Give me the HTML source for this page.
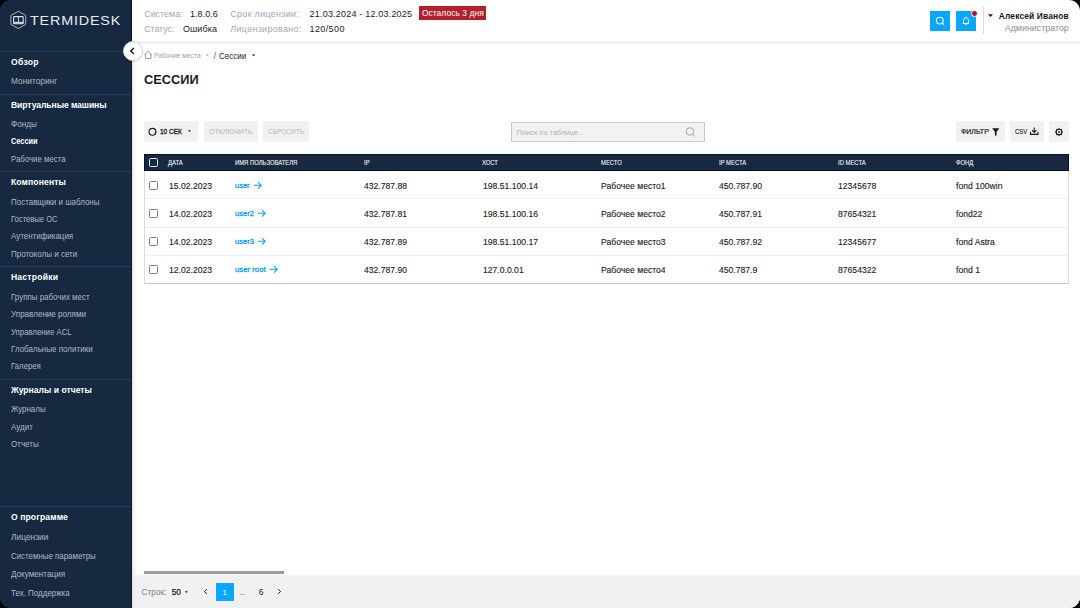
<!DOCTYPE html>
<html><head><meta charset="utf-8">
<style>
*{margin:0;padding:0;box-sizing:border-box}
html,body{width:1080px;height:608px;background:#000;overflow:hidden}
body{font-family:"Liberation Sans",sans-serif;color:#1a1a1a}
#app{position:absolute;left:0;top:0;width:1080px;height:608px;border-radius:11px;overflow:hidden;background:linear-gradient(90deg,#172941 0,#172941 132px,#fff 132px)}
.a{position:absolute}
.t{position:absolute;white-space:nowrap;line-height:1}
</style></head>
<body><div id="app">
<div class='a' style='left:0;top:0;width:132px;height:608px;background:#172941'></div>
<div class='a' style='left:131px;top:0;width:1px;height:608px;background:#0e1a2c'></div>
<div class='a' style='left:132px;top:42px;width:4px;height:566px;background:linear-gradient(90deg,rgba(0,0,0,.10),rgba(0,0,0,0))'></div>
<div class='a' style='left:0;top:51px;width:131px;height:1px;background:#243a59'></div>
<div class='a' style='left:0;top:94px;width:131px;height:1px;background:#243a59'></div>
<div class='a' style='left:0;top:171px;width:131px;height:1px;background:#243a59'></div>
<div class='a' style='left:0;top:266px;width:131px;height:1px;background:#243a59'></div>
<div class='a' style='left:0;top:379px;width:131px;height:1px;background:#243a59'></div>
<div class='a' style='left:0;top:506px;width:131px;height:1px;background:#243a59'></div>
<svg class='a' style='left:0;top:0' width='132' height='40' viewBox='0 0 132 40'>
<path d='M18.3 11.2 L25.7 15.4 L25.7 24.4 L18.3 28.6 L10.9 24.4 L10.9 15.4 Z' fill='none' stroke='#b9c0cc' stroke-width='0.9'/>
<rect x='13.6' y='16.6' width='9.6' height='7.2' rx='0.8' fill='none' stroke='#d9dde4' stroke-width='1.1'/>
<line x1='18.4' y1='16.4' x2='18.4' y2='22' stroke='#d9dde4' stroke-width='1'/>
<rect x='13.6' y='21.8' width='9.6' height='2.0' fill='#cfd4dc'/>
</svg>
<span class='t' style='left:30.2px;top:14.90px;font-size:12.4px;color:#e8ebf0;letter-spacing:0.7px;transform:scaleX(1.16);transform-origin:0 0'>TERMIDESK</span>
<div class='a' style='left:132px;top:41px;width:948px;height:1px;background:#f5f5f5'></div>
<div class='a' style='left:132px;top:42px;width:948px;height:1px;background:#ececec'></div>
<div class='a' style='left:132px;top:43px;width:948px;height:1px;background:#f8f8f8'></div>
<div class='a' style='left:419px;top:6px;width:67px;height:14px;background:#b21f2d'></div>
<div class='a' style='left:930px;top:11px;width:20px;height:20px;background:#0aa5fd'></div>
<div class='a' style='left:956px;top:11px;width:20px;height:20px;background:#0aa5fd'></div>
<svg class='a' style='left:930px;top:11px' width='20' height='20' viewBox='0 0 20 20'>
<circle cx='9.8' cy='9.6' r='3.4' fill='none' stroke='#fff' stroke-width='1.1'/>
<line x1='12.2' y1='12' x2='13.9' y2='13.7' stroke='#fff' stroke-width='1.1'/></svg>
<svg class='a' style='left:956px;top:11px' width='20' height='20' viewBox='0 0 20 20'>
<path d='M7.5 12.4 L7.5 9.6 Q7.5 6.7 10 6.5 Q12.5 6.7 12.5 9.6 L12.5 12.4 Z' fill='none' stroke='#fff' stroke-width='0.95'/>
<line x1='6.8' y1='12.5' x2='13.2' y2='12.5' stroke='#fff' stroke-width='0.95'/>
<path d='M9.2 13.4 Q10 14.2 10.8 13.4' fill='none' stroke='#fff' stroke-width='0.9'/>
<line x1='10' y1='5.7' x2='10' y2='6.5' stroke='#fff' stroke-width='0.9'/></svg>
<div class='a' style='left:971.2px;top:10px;width:7px;height:7px;border-radius:50%;background:#a8151f;border:1px solid #fff'></div>
<div class='a' style='left:983px;top:7px;width:1px;height:27px;background:#d9d9d9'></div>
<svg class='a' style='left:987px;top:13px' width='7' height='5' viewBox='0 0 7 5'><path d='M1 1.3 L6 1.3 L3.5 3.9 Z' fill='#1b1b1b'/></svg>
<div class='a' style='left:122.5px;top:41px;width:20px;height:20px;border-radius:50%;background:#fff;border:1px solid #d6d6d6;box-shadow:0 1px 2px rgba(0,0,0,.12)'></div>
<svg class='a' style='left:122.5px;top:41px' width='20' height='20' viewBox='0 0 20 20'><path d='M10.9 6.9 L7.8 10 L10.9 13.1' fill='none' stroke='#111' stroke-width='1.35'/></svg>
<svg class='a' style='left:144px;top:50px' width='9' height='10' viewBox='0 0 9 10'>
<path d='M0.6 4.9 L4.3 1.2 L8 4.9 M1.6 3.9 L1.6 8.6 L7 8.6 L7 3.9' fill='none' stroke='#8a8a8a' stroke-width='0.9'/></svg>
<svg class='a' style='left:205px;top:53px' width='5' height='4' viewBox='0 0 5 4'><path d='M0.8 1.4 L4 1.4 L2.4 3.1 Z' fill='#9a9a9a'/></svg>
<svg class='a' style='left:251px;top:53px' width='5' height='4' viewBox='0 0 5 4'><path d='M0.8 1.4 L4.2 1.4 L2.5 3.2 Z' fill='#1b1b1b'/></svg>
<div class='a' style='left:144px;top:121px;width:54px;height:21px;background:#f1f1f1'></div>
<div class='a' style='left:204px;top:121px;width:53.5px;height:21px;background:#f1f1f1'></div>
<div class='a' style='left:263px;top:121px;width:45.7px;height:21px;background:#f1f1f1'></div>
<svg class='a' style='left:148px;top:127px' width='10' height='10' viewBox='0 0 10 10'>
<circle cx='4.5' cy='4.8' r='3.4' fill='none' stroke='#1b1b1b' stroke-width='1.15'/><path d='M7.2 4.2 L8.6 5.6 L6.6 6.2 Z' fill='#1b1b1b'/></svg>
<svg class='a' style='left:187px;top:129px' width='5' height='4' viewBox='0 0 5 4'><path d='M0.9 1.3 L3.9 1.3 L2.4 2.9 Z' fill='#1b1b1b'/></svg>
<div class='a' style='left:511px;top:121.5px;width:194px;height:20px;background:#f2f2f2;border:1px solid #c9c9c9'></div>
<svg class='a' style='left:684px;top:126px' width='13' height='12' viewBox='0 0 13 12'>
<circle cx='5.9' cy='5.5' r='3.8' fill='none' stroke='#9b9b9b' stroke-width='0.9'/>
<line x1='8.6' y1='8.2' x2='11' y2='10.5' stroke='#9b9b9b' stroke-width='0.9'/></svg>
<div class='a' style='left:956px;top:121px;width:48.5px;height:21px;background:#f1f1f1'></div>
<div class='a' style='left:1010px;top:121px;width:33.8px;height:21px;background:#f1f1f1'></div>
<div class='a' style='left:1048.7px;top:121px;width:20.7px;height:21px;background:#f1f1f1'></div>
<svg class='a' style='left:991px;top:127px' width='10' height='10' viewBox='0 0 10 10'><path d='M1.2 1.3 L8.3 1.3 L5.6 4.8 L5.6 8.6 L3.9 8.6 L3.9 4.8 Z' fill='#1b1b1b'/></svg>
<svg class='a' style='left:1029px;top:126px' width='11' height='10' viewBox='0 0 11 10'>
<path d='M5.2 1.5 L5.2 6.2 M3 4.2 L5.2 6.4 L7.4 4.2' fill='none' stroke='#1b1b1b' stroke-width='1.1'/>
<path d='M1.5 5.8 L1.5 8.4 L9 8.4 L9 5.8' fill='none' stroke='#1b1b1b' stroke-width='1.1'/></svg>
<svg class='a' style='left:1054px;top:126.6px' width='10' height='10' viewBox='0 0 10 10'>
<circle cx='5' cy='5' r='2.8' fill='none' stroke='#1b1b1b' stroke-width='1.1'/><rect x='4.4' y='1.1' width='1.2' height='1.2' fill='#1b1b1b' transform='rotate(0 5 5)'/><rect x='4.4' y='1.1' width='1.2' height='1.2' fill='#1b1b1b' transform='rotate(45 5 5)'/><rect x='4.4' y='1.1' width='1.2' height='1.2' fill='#1b1b1b' transform='rotate(90 5 5)'/><rect x='4.4' y='1.1' width='1.2' height='1.2' fill='#1b1b1b' transform='rotate(135 5 5)'/><rect x='4.4' y='1.1' width='1.2' height='1.2' fill='#1b1b1b' transform='rotate(180 5 5)'/><rect x='4.4' y='1.1' width='1.2' height='1.2' fill='#1b1b1b' transform='rotate(225 5 5)'/><rect x='4.4' y='1.1' width='1.2' height='1.2' fill='#1b1b1b' transform='rotate(270 5 5)'/><rect x='4.4' y='1.1' width='1.2' height='1.2' fill='#1b1b1b' transform='rotate(315 5 5)'/>
<circle cx='5' cy='5' r='1' fill='#1b1b1b'/></svg>
<div class='a' style='left:144px;top:154px;width:925px;height:130px;border:1px solid #dcdcdc;border-bottom-color:#c9c9c9;border-top:none;background:#fff'></div>
<div class='a' style='left:144px;top:154px;width:925px;height:17px;background:#172941;border:1px solid #06102a'></div>
<div class='a' style='left:145px;top:198px;width:923px;height:1px;background:#eeeff3'></div>
<div class='a' style='left:145px;top:227px;width:923px;height:1px;background:#eeeff3'></div>
<div class='a' style='left:145px;top:255px;width:923px;height:1px;background:#eeeff3'></div>
<div class='a' style='left:149px;top:157.8px;width:9px;height:9px;border:1.6px solid #e8ebf0;border-radius:1.5px'></div>
<div class='a' style='left:149px;top:180.9px;width:9px;height:9px;border:1.2px solid #808080;border-radius:1.5px'></div>
<div class='a' style='left:149px;top:208.9px;width:9px;height:9px;border:1.2px solid #808080;border-radius:1.5px'></div>
<div class='a' style='left:149px;top:236.9px;width:9px;height:9px;border:1.2px solid #808080;border-radius:1.5px'></div>
<div class='a' style='left:149px;top:264.9px;width:9px;height:9px;border:1.2px solid #808080;border-radius:1.5px'></div>
<svg class='a' style='left:253.0px;top:180.2px' width='10' height='10' viewBox='0 0 10 10'>
<path d='M1 5.3 L8 5.3 M5 2 L8.2 5.3 L5 8.6' fill='none' stroke='#0aa0f0' stroke-width='1.05'/></svg>
<svg class='a' style='left:257.1px;top:208.2px' width='10' height='10' viewBox='0 0 10 10'>
<path d='M1 5.3 L8 5.3 M5 2 L8.2 5.3 L5 8.6' fill='none' stroke='#0aa0f0' stroke-width='1.05'/></svg>
<svg class='a' style='left:257.1px;top:236.2px' width='10' height='10' viewBox='0 0 10 10'>
<path d='M1 5.3 L8 5.3 M5 2 L8.2 5.3 L5 8.6' fill='none' stroke='#0aa0f0' stroke-width='1.05'/></svg>
<svg class='a' style='left:268.9px;top:264.2px' width='10' height='10' viewBox='0 0 10 10'>
<path d='M1 5.3 L8 5.3 M5 2 L8.2 5.3 L5 8.6' fill='none' stroke='#0aa0f0' stroke-width='1.05'/></svg>
<div class='a' style='left:144px;top:571px;width:140px;height:3px;background:#9b9b9b'></div>
<div class='a' style='left:134px;top:575px;width:946px;height:33px;background:#f1f1f1'></div>
<svg class='a' style='left:184px;top:590px' width='5' height='4' viewBox='0 0 5 4'><path d='M0.8 1.2 L4 1.2 L2.4 2.9 Z' fill='#1b1b1b'/></svg>
<svg class='a' style='left:202px;top:588px' width='7' height='7' viewBox='0 0 7 7'><path d='M4.8 1.2 L2.4 3.5 L4.8 5.8' fill='none' stroke='#1b1b1b' stroke-width='1'/></svg>
<div class='a' style='left:215.7px;top:582.8px;width:18.2px;height:17.8px;background:#0aa5fd'></div>
<svg class='a' style='left:276px;top:588px' width='7' height='7' viewBox='0 0 7 7'><path d='M2.2 1.2 L4.6 3.5 L2.2 5.8' fill='none' stroke='#1b1b1b' stroke-width='1'/></svg>
<span class='t' style='left:10.90px;top:58.00px;font-size:8.60px;color:#ffffff;font-weight:bold;letter-spacing:0.316px;'>Обзор</span>
<span class='t' style='left:10.90px;top:78.00px;font-size:8.20px;color:#b0b7c3;font-weight:normal;letter-spacing:0.000px;transform:scaleX(1.017);transform-origin:0 0;'>Мониторинг</span>
<span class='t' style='left:10.90px;top:101.00px;font-size:8.60px;color:#ffffff;font-weight:bold;letter-spacing:-0.073px;'>Виртуальные машины</span>
<span class='t' style='left:10.90px;top:121.00px;font-size:8.20px;color:#b0b7c3;font-weight:normal;letter-spacing:0.000px;transform:scaleX(1.001);transform-origin:0 0;'>Фонды</span>
<span class='t' style='left:10.90px;top:137.00px;font-size:8.40px;color:#ffffff;font-weight:bold;letter-spacing:0.000px;transform:scaleX(0.880);transform-origin:0 0;'>Сессии</span>
<span class='t' style='left:10.90px;top:156.00px;font-size:8.20px;color:#b0b7c3;font-weight:normal;letter-spacing:0.000px;transform:scaleX(0.957);transform-origin:0 0;'>Рабочие места</span>
<span class='t' style='left:10.90px;top:178.00px;font-size:8.60px;color:#ffffff;font-weight:bold;letter-spacing:0.123px;'>Компоненты</span>
<span class='t' style='left:10.90px;top:199.00px;font-size:8.20px;color:#b0b7c3;font-weight:normal;letter-spacing:0.000px;transform:scaleX(0.973);transform-origin:0 0;'>Поставщики и шаблоны</span>
<span class='t' style='left:10.90px;top:216.00px;font-size:8.20px;color:#b0b7c3;font-weight:normal;letter-spacing:0.000px;transform:scaleX(0.930);transform-origin:0 0;'>Гостевые ОС</span>
<span class='t' style='left:10.90px;top:233.00px;font-size:8.20px;color:#b0b7c3;font-weight:normal;letter-spacing:0.000px;transform:scaleX(0.974);transform-origin:0 0;'>Аутентификация</span>
<span class='t' style='left:10.90px;top:251.00px;font-size:8.20px;color:#b0b7c3;font-weight:normal;letter-spacing:0.000px;transform:scaleX(0.981);transform-origin:0 0;'>Протоколы и сети</span>
<span class='t' style='left:10.90px;top:273.00px;font-size:8.60px;color:#ffffff;font-weight:bold;letter-spacing:0.220px;'>Настройки</span>
<span class='t' style='left:10.90px;top:294.00px;font-size:8.20px;color:#b0b7c3;font-weight:normal;letter-spacing:0.000px;transform:scaleX(0.971);transform-origin:0 0;'>Группы рабочих мест</span>
<span class='t' style='left:10.90px;top:311.00px;font-size:8.20px;color:#b0b7c3;font-weight:normal;letter-spacing:0.000px;transform:scaleX(0.985);transform-origin:0 0;'>Управление ролями</span>
<span class='t' style='left:10.90px;top:329.00px;font-size:8.20px;color:#b0b7c3;font-weight:normal;letter-spacing:0.000px;transform:scaleX(0.951);transform-origin:0 0;'>Управление ACL</span>
<span class='t' style='left:10.90px;top:346.00px;font-size:8.20px;color:#b0b7c3;font-weight:normal;letter-spacing:0.000px;transform:scaleX(0.979);transform-origin:0 0;'>Глобальные политики</span>
<span class='t' style='left:10.90px;top:363.00px;font-size:8.20px;color:#b0b7c3;font-weight:normal;letter-spacing:0.000px;transform:scaleX(0.949);transform-origin:0 0;'>Галерея</span>
<span class='t' style='left:10.90px;top:386.00px;font-size:8.60px;color:#ffffff;font-weight:bold;letter-spacing:0.002px;'>Журналы и отчеты</span>
<span class='t' style='left:10.90px;top:406.00px;font-size:8.20px;color:#b0b7c3;font-weight:normal;letter-spacing:0.000px;transform:scaleX(0.967);transform-origin:0 0;'>Журналы</span>
<span class='t' style='left:10.90px;top:424.00px;font-size:8.20px;color:#b0b7c3;font-weight:normal;letter-spacing:0.000px;transform:scaleX(0.978);transform-origin:0 0;'>Аудит</span>
<span class='t' style='left:10.90px;top:441.00px;font-size:8.20px;color:#b0b7c3;font-weight:normal;letter-spacing:0.000px;transform:scaleX(0.978);transform-origin:0 0;'>Отчеты</span>
<span class='t' style='left:10.90px;top:513.00px;font-size:8.60px;color:#ffffff;font-weight:bold;letter-spacing:0.113px;'>О программе</span>
<span class='t' style='left:10.90px;top:534.00px;font-size:8.20px;color:#b0b7c3;font-weight:normal;letter-spacing:0.000px;transform:scaleX(1.024);transform-origin:0 0;'>Лицензии</span>
<span class='t' style='left:10.90px;top:553.00px;font-size:8.20px;color:#b0b7c3;font-weight:normal;letter-spacing:0.000px;transform:scaleX(0.965);transform-origin:0 0;'>Системные параметры</span>
<span class='t' style='left:10.90px;top:571.00px;font-size:8.20px;color:#b0b7c3;font-weight:normal;letter-spacing:0.000px;transform:scaleX(0.993);transform-origin:0 0;'>Документация</span>
<span class='t' style='left:10.90px;top:590.00px;font-size:8.20px;color:#b0b7c3;font-weight:normal;letter-spacing:0.000px;transform:scaleX(0.974);transform-origin:0 0;'>Тех. Поддержка</span>
<span class='t' style='left:144.20px;top:10.00px;font-size:9.00px;color:#a2a7b3;font-weight:normal;letter-spacing:-0.050px;'>Система:</span>
<span class='t' style='left:190.00px;top:10.00px;font-size:9.00px;color:#1b1b1b;font-weight:normal;letter-spacing:0.045px;'>1.8.0.6</span>
<span class='t' style='left:230.30px;top:10.00px;font-size:9.00px;color:#a2a7b3;font-weight:normal;letter-spacing:0.273px;'>Срок лицензии:</span>
<span class='t' style='left:309.60px;top:10.00px;font-size:9.00px;color:#1b1b1b;font-weight:normal;letter-spacing:0.196px;'>21.03.2024 - 12.03.2025</span>
<span class='t' style='left:421.90px;top:9.00px;font-size:8.40px;color:#ffffff;font-weight:normal;letter-spacing:0.088px;'>Осталось 3 дня</span>
<span class='t' style='left:144.20px;top:25.00px;font-size:9.00px;color:#a2a7b3;font-weight:normal;letter-spacing:-0.142px;'>Статус:</span>
<span class='t' style='left:183.00px;top:25.00px;font-size:9.00px;color:#1b1b1b;font-weight:normal;letter-spacing:0.071px;'>Ошибка</span>
<span class='t' style='left:230.30px;top:25.00px;font-size:9.00px;color:#a2a7b3;font-weight:normal;letter-spacing:0.285px;'>Лицензировано:</span>
<span class='t' style='left:309.60px;top:25.00px;font-size:9.00px;color:#1b1b1b;font-weight:normal;letter-spacing:0.376px;'>120/500</span>
<span class='t' style='left:998.75px;top:12.00px;font-size:8.40px;color:#151515;font-weight:bold;letter-spacing:0.167px;'>Алексей Иванов</span>
<span class='t' style='left:1004.75px;top:24.00px;font-size:8.90px;color:#8f8f8f;font-weight:normal;letter-spacing:-0.003px;'>Администратор</span>
<span class='t' style='left:153.90px;top:52.00px;font-size:7.00px;color:#a0a0a0;font-weight:normal;letter-spacing:0.000px;transform:scaleX(0.957);transform-origin:0 0;'>Рабочие места</span>
<span class='t' style='left:213.60px;top:52.00px;font-size:9.00px;color:#555555;font-weight:normal;letter-spacing:0.000px;'>/</span>
<span class='t' style='left:218.90px;top:52.00px;font-size:8.60px;color:#1b1b1b;font-weight:normal;letter-spacing:0.000px;transform:scaleX(0.932);transform-origin:0 0;'>Сессии</span>
<span class='t' style='left:144.20px;top:73.00px;font-size:13.60px;color:#1b1b1b;font-weight:bold;letter-spacing:0.000px;transform:scaleX(0.940);transform-origin:0 0;'>СЕССИИ</span>
<span class='t' style='left:160.00px;top:128.00px;font-size:7.70px;color:#1b1b1b;font-weight:normal;letter-spacing:0.000px;transform:scaleX(0.847);transform-origin:0 0;-webkit-text-stroke:0.35px #1b1b1b;'>10 СЕК</span>
<span class='t' style='left:209.00px;top:128.00px;font-size:7.70px;color:#b5b5b5;font-weight:normal;letter-spacing:0.000px;transform:scaleX(0.904);transform-origin:0 0;'>ОТКЛЮЧИТЬ</span>
<span class='t' style='left:268.00px;top:128.00px;font-size:7.70px;color:#b5b5b5;font-weight:normal;letter-spacing:0.000px;transform:scaleX(0.848);transform-origin:0 0;'>СБРОСИТЬ</span>
<span class='t' style='left:516.70px;top:129.00px;font-size:7.40px;color:#b1b1b1;font-weight:normal;letter-spacing:0.024px;'>Поиск по таблице...</span>
<span class='t' style='left:960.80px;top:128.00px;font-size:7.30px;color:#1b1b1b;font-weight:normal;letter-spacing:0.000px;transform:scaleX(0.960);transform-origin:0 0;-webkit-text-stroke:0.2px #1b1b1b;'>ФИЛЬТР</span>
<span class='t' style='left:1015.00px;top:128.00px;font-size:7.60px;color:#1b1b1b;font-weight:normal;letter-spacing:0.000px;transform:scaleX(0.781);transform-origin:0 0;-webkit-text-stroke:0.15px #1b1b1b;'>CSV</span>
<span class='t' style='left:168.30px;top:159.00px;font-size:7.00px;color:#f2f4f7;font-weight:normal;letter-spacing:0.000px;-webkit-text-stroke:0.1px #f2f4f7;transform:scaleX(0.84);transform-origin:0 0;'>ДАТА</span>
<span class='t' style='left:234.80px;top:159.00px;font-size:7.00px;color:#f2f4f7;font-weight:normal;letter-spacing:0.000px;-webkit-text-stroke:0.1px #f2f4f7;transform:scaleX(0.84);transform-origin:0 0;'>ИМЯ ПОЛЬЗОВАТЕЛЯ</span>
<span class='t' style='left:363.60px;top:159.00px;font-size:7.00px;color:#f2f4f7;font-weight:normal;letter-spacing:0.000px;-webkit-text-stroke:0.1px #f2f4f7;transform:scaleX(0.84);transform-origin:0 0;'>IP</span>
<span class='t' style='left:482.20px;top:159.00px;font-size:7.00px;color:#f2f4f7;font-weight:normal;letter-spacing:0.000px;-webkit-text-stroke:0.1px #f2f4f7;transform:scaleX(0.84);transform-origin:0 0;'>ХОСТ</span>
<span class='t' style='left:600.60px;top:159.00px;font-size:7.00px;color:#f2f4f7;font-weight:normal;letter-spacing:0.000px;-webkit-text-stroke:0.1px #f2f4f7;transform:scaleX(0.84);transform-origin:0 0;'>МЕСТО</span>
<span class='t' style='left:719.00px;top:159.00px;font-size:7.00px;color:#f2f4f7;font-weight:normal;letter-spacing:0.000px;-webkit-text-stroke:0.1px #f2f4f7;transform:scaleX(0.84);transform-origin:0 0;'>IP МЕСТА</span>
<span class='t' style='left:838.00px;top:159.00px;font-size:7.00px;color:#f2f4f7;font-weight:normal;letter-spacing:0.000px;-webkit-text-stroke:0.1px #f2f4f7;transform:scaleX(0.84);transform-origin:0 0;'>ID МЕСТА</span>
<span class='t' style='left:956.00px;top:159.00px;font-size:7.00px;color:#f2f4f7;font-weight:normal;letter-spacing:0.000px;-webkit-text-stroke:0.1px #f2f4f7;transform:scaleX(0.84);transform-origin:0 0;'>ФОНД</span>
<span class='t' style='left:168.70px;top:182.00px;font-size:8.90px;color:#1b1b1b;font-weight:normal;letter-spacing:0.000px;-webkit-text-stroke:0.12px #1b1b1b;transform:scaleX(0.97);transform-origin:0 0;'>15.02.2023</span>
<span class='t' style='left:234.80px;top:182.00px;font-size:8.00px;color:#0aa0f0;font-weight:normal;letter-spacing:0.000px;transform:scaleX(0.938);transform-origin:0 0;-webkit-text-stroke:0.3px #0aa0f0;'>user</span>
<span class='t' style='left:364.00px;top:182.00px;font-size:8.90px;color:#1b1b1b;font-weight:normal;letter-spacing:0.000px;-webkit-text-stroke:0.12px #1b1b1b;transform:scaleX(0.97);transform-origin:0 0;'>432.787.88</span>
<span class='t' style='left:482.60px;top:182.00px;font-size:8.90px;color:#1b1b1b;font-weight:normal;letter-spacing:0.000px;-webkit-text-stroke:0.12px #1b1b1b;transform:scaleX(0.97);transform-origin:0 0;'>198.51.100.14</span>
<span class='t' style='left:601.00px;top:182.00px;font-size:8.90px;color:#1b1b1b;font-weight:normal;letter-spacing:0.000px;-webkit-text-stroke:0.12px #1b1b1b;transform:scaleX(0.97);transform-origin:0 0;'>Рабочее место1</span>
<span class='t' style='left:719.40px;top:182.00px;font-size:8.90px;color:#1b1b1b;font-weight:normal;letter-spacing:0.000px;-webkit-text-stroke:0.12px #1b1b1b;transform:scaleX(0.97);transform-origin:0 0;'>450.787.90</span>
<span class='t' style='left:838.40px;top:182.00px;font-size:8.90px;color:#1b1b1b;font-weight:normal;letter-spacing:0.000px;-webkit-text-stroke:0.12px #1b1b1b;transform:scaleX(0.97);transform-origin:0 0;'>12345678</span>
<span class='t' style='left:956.40px;top:182.00px;font-size:8.90px;color:#1b1b1b;font-weight:normal;letter-spacing:0.000px;-webkit-text-stroke:0.12px #1b1b1b;transform:scaleX(0.97);transform-origin:0 0;'>fond 100win</span>
<span class='t' style='left:168.70px;top:210.00px;font-size:8.90px;color:#1b1b1b;font-weight:normal;letter-spacing:0.000px;-webkit-text-stroke:0.12px #1b1b1b;transform:scaleX(0.97);transform-origin:0 0;'>14.02.2023</span>
<span class='t' style='left:234.80px;top:210.00px;font-size:8.00px;color:#0aa0f0;font-weight:normal;letter-spacing:0.000px;transform:scaleX(0.949);transform-origin:0 0;-webkit-text-stroke:0.3px #0aa0f0;'>user2</span>
<span class='t' style='left:364.00px;top:210.00px;font-size:8.90px;color:#1b1b1b;font-weight:normal;letter-spacing:0.000px;-webkit-text-stroke:0.12px #1b1b1b;transform:scaleX(0.97);transform-origin:0 0;'>432.787.81</span>
<span class='t' style='left:482.60px;top:210.00px;font-size:8.90px;color:#1b1b1b;font-weight:normal;letter-spacing:0.000px;-webkit-text-stroke:0.12px #1b1b1b;transform:scaleX(0.97);transform-origin:0 0;'>198.51.100.16</span>
<span class='t' style='left:601.00px;top:210.00px;font-size:8.90px;color:#1b1b1b;font-weight:normal;letter-spacing:0.000px;-webkit-text-stroke:0.12px #1b1b1b;transform:scaleX(0.97);transform-origin:0 0;'>Рабочее место2</span>
<span class='t' style='left:719.40px;top:210.00px;font-size:8.90px;color:#1b1b1b;font-weight:normal;letter-spacing:0.000px;-webkit-text-stroke:0.12px #1b1b1b;transform:scaleX(0.97);transform-origin:0 0;'>450.787.91</span>
<span class='t' style='left:838.40px;top:210.00px;font-size:8.90px;color:#1b1b1b;font-weight:normal;letter-spacing:0.000px;-webkit-text-stroke:0.12px #1b1b1b;transform:scaleX(0.97);transform-origin:0 0;'>87654321</span>
<span class='t' style='left:956.40px;top:210.00px;font-size:8.90px;color:#1b1b1b;font-weight:normal;letter-spacing:0.000px;-webkit-text-stroke:0.12px #1b1b1b;transform:scaleX(0.97);transform-origin:0 0;'>fond22</span>
<span class='t' style='left:168.70px;top:238.00px;font-size:8.90px;color:#1b1b1b;font-weight:normal;letter-spacing:0.000px;-webkit-text-stroke:0.12px #1b1b1b;transform:scaleX(0.97);transform-origin:0 0;'>14.02.2023</span>
<span class='t' style='left:234.80px;top:238.00px;font-size:8.00px;color:#0aa0f0;font-weight:normal;letter-spacing:0.000px;transform:scaleX(0.949);transform-origin:0 0;-webkit-text-stroke:0.3px #0aa0f0;'>user3</span>
<span class='t' style='left:364.00px;top:238.00px;font-size:8.90px;color:#1b1b1b;font-weight:normal;letter-spacing:0.000px;-webkit-text-stroke:0.12px #1b1b1b;transform:scaleX(0.97);transform-origin:0 0;'>432.787.89</span>
<span class='t' style='left:482.60px;top:238.00px;font-size:8.90px;color:#1b1b1b;font-weight:normal;letter-spacing:0.000px;-webkit-text-stroke:0.12px #1b1b1b;transform:scaleX(0.97);transform-origin:0 0;'>198.51.100.17</span>
<span class='t' style='left:601.00px;top:238.00px;font-size:8.90px;color:#1b1b1b;font-weight:normal;letter-spacing:0.000px;-webkit-text-stroke:0.12px #1b1b1b;transform:scaleX(0.97);transform-origin:0 0;'>Рабочее место3</span>
<span class='t' style='left:719.40px;top:238.00px;font-size:8.90px;color:#1b1b1b;font-weight:normal;letter-spacing:0.000px;-webkit-text-stroke:0.12px #1b1b1b;transform:scaleX(0.97);transform-origin:0 0;'>450.787.92</span>
<span class='t' style='left:838.40px;top:238.00px;font-size:8.90px;color:#1b1b1b;font-weight:normal;letter-spacing:0.000px;-webkit-text-stroke:0.12px #1b1b1b;transform:scaleX(0.97);transform-origin:0 0;'>12345677</span>
<span class='t' style='left:956.40px;top:238.00px;font-size:8.90px;color:#1b1b1b;font-weight:normal;letter-spacing:0.000px;-webkit-text-stroke:0.12px #1b1b1b;transform:scaleX(0.97);transform-origin:0 0;'>fond Astra</span>
<span class='t' style='left:168.70px;top:266.00px;font-size:8.90px;color:#1b1b1b;font-weight:normal;letter-spacing:0.000px;-webkit-text-stroke:0.12px #1b1b1b;transform:scaleX(0.97);transform-origin:0 0;'>12.02.2023</span>
<span class='t' style='left:234.80px;top:266.00px;font-size:8.00px;color:#0aa0f0;font-weight:normal;letter-spacing:0.000px;transform:scaleX(0.969);transform-origin:0 0;-webkit-text-stroke:0.3px #0aa0f0;'>user root</span>
<span class='t' style='left:364.00px;top:266.00px;font-size:8.90px;color:#1b1b1b;font-weight:normal;letter-spacing:0.000px;-webkit-text-stroke:0.12px #1b1b1b;transform:scaleX(0.97);transform-origin:0 0;'>432.787.90</span>
<span class='t' style='left:482.60px;top:266.00px;font-size:8.90px;color:#1b1b1b;font-weight:normal;letter-spacing:0.000px;-webkit-text-stroke:0.12px #1b1b1b;transform:scaleX(0.97);transform-origin:0 0;'>127.0.0.01</span>
<span class='t' style='left:601.00px;top:266.00px;font-size:8.90px;color:#1b1b1b;font-weight:normal;letter-spacing:0.000px;-webkit-text-stroke:0.12px #1b1b1b;transform:scaleX(0.97);transform-origin:0 0;'>Рабочее место4</span>
<span class='t' style='left:719.40px;top:266.00px;font-size:8.90px;color:#1b1b1b;font-weight:normal;letter-spacing:0.000px;-webkit-text-stroke:0.12px #1b1b1b;transform:scaleX(0.97);transform-origin:0 0;'>450.787.9</span>
<span class='t' style='left:838.40px;top:266.00px;font-size:8.90px;color:#1b1b1b;font-weight:normal;letter-spacing:0.000px;-webkit-text-stroke:0.12px #1b1b1b;transform:scaleX(0.97);transform-origin:0 0;'>87654322</span>
<span class='t' style='left:956.40px;top:266.00px;font-size:8.90px;color:#1b1b1b;font-weight:normal;letter-spacing:0.000px;-webkit-text-stroke:0.12px #1b1b1b;transform:scaleX(0.97);transform-origin:0 0;'>fond 1</span>
<span class='t' style='left:141.60px;top:589.00px;font-size:8.25px;color:#7c7c7c;font-weight:normal;letter-spacing:0.000px;'>Строк:</span>
<span class='t' style='left:171.70px;top:589.00px;font-size:8.27px;color:#1b1b1b;font-weight:normal;letter-spacing:0.000px;-webkit-text-stroke:0.25px #1b1b1b;'>50</span>
<span class='t' style='left:222.40px;top:589.00px;font-size:8.00px;color:#ffffff;font-weight:normal;letter-spacing:0.000px;'>1</span>
<span class='t' style='left:239.60px;top:590.00px;font-size:6.83px;color:#1b1b1b;font-weight:normal;letter-spacing:0.000px;'>...</span>
<span class='t' style='left:258.70px;top:588.00px;font-size:8.60px;color:#1b1b1b;font-weight:normal;letter-spacing:0.000px;'>6</span>
</div></body></html>
